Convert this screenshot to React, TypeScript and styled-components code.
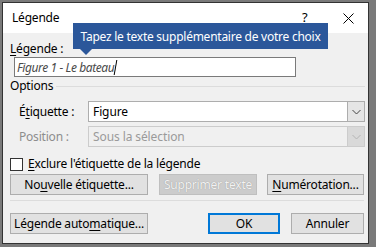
import React from "react";
import styled, { createGlobalStyle } from "styled-components";

const Global = createGlobalStyle`
  html, body { margin: 0; padding: 0; }
  body {
    background: #7a7a7a;
    width: 376px;
    height: 247px;
    overflow: hidden;
    font-family: "Noto Sans", "Open Sans", sans-serif;
    font-size: 12px;
    color: #000;
  }
`;

const Frame = styled.div`
  padding: 2px 7px 3px 2px;
`;

const Window = styled.div`
  box-sizing: border-box;
  width: 367px;
  height: 242px;
  border: 1px solid #333;
  background: #f0f0f0;
  display: flex;
  flex-direction: column;
  position: relative;
`;

const TitleBar = styled.div`
  height: 30px;
  background: #fff;
  display: flex;
  align-items: center;
  padding-left: 9px;
  padding-right: 14px;
  flex-shrink: 0;
`;

const Title = styled.div`
  flex: 1;
  font-size: 12px;
  letter-spacing: -0.2px;
  margin-top: -1px;
`;

const Help = styled.div`
  font-size: 13px;
  width: 10px;
  margin-right: 31px;
  margin-top: -2px;
`;

const Tooltip = styled.div`
  position: absolute;
  left: 70px;
  top: 20px;
  width: 255px;
  height: 26px;
  background: #2b579a;
  color: #fff;
  font-size: 12px;
  display: flex;
  align-items: center;
  justify-content: center;
  letter-spacing: -0.25px;
  &::after {
    content: "";
    position: absolute;
    left: 7px;
    bottom: -6px;
    border-left: 6px solid transparent;
    border-right: 6px solid transparent;
    border-top: 6px solid #2b579a;
  }
`;

const Body = styled.div`
  display: flex;
  flex-direction: column;
  padding: 0 3px 0 7px;
`;

const Label = styled.div<{ $disabled?: boolean }>`
  line-height: 16px;
  color: ${(p) => (p.$disabled ? "#8d8d8d" : "#000")};
  letter-spacing: -0.2px;
  white-space: nowrap;
`;

const CaptionLabel = styled(Label)`
  margin-top: 8px;
`;

const TextInput = styled.div`
  box-sizing: border-box;
  margin-left: 4px;
  width: 282px;
  height: 20px;
  background: #fff;
  border: 1px solid #7a7a7a;
  display: flex;
  align-items: center;
  padding-left: 2px;
  font-style: italic;
  color: #4a4a4a;
  letter-spacing: -0.4px;
`;

const Caret = styled.span`
  display: inline-block;
  width: 1px;
  height: 15px;
  background: #000;
  margin-left: 1px;
  transform: skewX(-10deg);
`;

const GroupHeader = styled.div`
  display: flex;
  align-items: center;
  margin-top: 1px;
  gap: 3px;
  &::after {
    content: "";
    flex: 1;
    height: 1px;
    background: #dcdcdc;
    margin-top: 1px;
  }
`;

const FieldRow = styled.div<{ $top: number }>`
  display: flex;
  align-items: center;
  margin-top: ${(p) => p.$top}px;
`;

const FieldLabel = styled(Label)`
  width: 71px;
  padding-left: 9px;
`;

const Select = styled.div<{ $disabled?: boolean }>`
  box-sizing: border-box;
  width: 285px;
  height: 21px;
  display: flex;
  border: 1px solid ${(p) => (p.$disabled ? "#cccccc" : "#adadad")};
  background: ${(p) => (p.$disabled ? "#f0f0f0" : "#fff")};
  color: ${(p) => (p.$disabled ? "#9a9a9a" : "#000")};
`;

const SelectValue = styled.div`
  flex: 1;
  display: flex;
  align-items: center;
  padding-left: 4px;
  letter-spacing: -0.1px;
`;

const SelectButton = styled.div<{ $disabled?: boolean }>`
  width: 16px;
  display: flex;
  align-items: center;
  justify-content: center;
  background: ${(p) => (p.$disabled ? "#d9d9d9" : "#e5e5e5")};
  border-left: 1px solid ${(p) => (p.$disabled ? "#cccccc" : "#adadad")};
  color: ${(p) => (p.$disabled ? "#b4b4b4" : "#444")};
`;

const CheckRow = styled.div`
  display: flex;
  align-items: center;
  gap: 5px;
  margin-top: 9px;
`;

const CheckBox = styled.div`
  box-sizing: border-box;
  width: 13px;
  height: 13px;
  background: #fff;
  border: 1px solid #333;
`;

const ButtonRow = styled.div<{ $top: number }>`
  display: flex;
  align-items: center;
  margin-top: ${(p) => p.$top}px;
`;

const Button = styled.div<{ $w: number; $gap?: number; $disabled?: boolean; $default?: boolean }>`
  box-sizing: border-box;
  width: ${(p) => p.$w}px;
  height: 21px;
  margin-left: ${(p) => p.$gap ?? 0}px;
  display: flex;
  align-items: center;
  justify-content: center;
  background: ${(p) => (p.$disabled ? "#cccccc" : "#e1e1e1")};
  border: ${(p) =>
    p.$default ? "2px solid #0078d7" : p.$disabled ? "1px solid #bfbfbf" : "1px solid #adadad"};
  color: ${(p) => (p.$disabled ? "#f2f2f2" : "#000")};
  text-shadow: ${(p) => (p.$disabled ? "0 0 1px #8a8a8a" : "none")};
  letter-spacing: -0.2px;
  white-space: nowrap;
`;

const Divider = styled.div`
  height: 1px;
  background: #dcdcdc;
  margin: 5px 1px 0 0;
`;

const U = styled.span`
  text-decoration: underline;
  text-underline-offset: 2px;
`;

const Chevron = () => (
  <svg width="9" height="6" viewBox="0 0 9 6">
    <path d="M0.5 1 L4.5 5 L8.5 1" fill="none" stroke="currentColor" strokeWidth="1" />
  </svg>
);

const CloseIcon = () => (
  <svg width="11" height="11" viewBox="0 0 11 11">
    <path d="M0.5 0.5 L10.5 10.5 M10.5 0.5 L0.5 10.5" stroke="#000" strokeWidth="1" />
  </svg>
);

export default function App() {
  return (
    <>
      <Global />
      <Frame>
        <Window>
          <TitleBar>
            <Title>Légende</Title>
            <Help>?</Help>
            <CloseIcon />
          </TitleBar>
          <Tooltip>Tapez le texte supplémentaire de votre choix</Tooltip>
          <Body>
            <CaptionLabel>
              <U>L</U>égende :
            </CaptionLabel>
            <TextInput>
              Figure 1 - Le bateau
              <Caret />
            </TextInput>
            <GroupHeader>
              <Label>Options</Label>
            </GroupHeader>
            <FieldRow $top={7}>
              <FieldLabel>
                É<U>t</U>iquette :
              </FieldLabel>
              <Select>
                <SelectValue>Figure</SelectValue>
                <SelectButton>
                  <Chevron />
                </SelectButton>
              </Select>
            </FieldRow>
            <FieldRow $top={4}>
              <FieldLabel $disabled>Position :</FieldLabel>
              <Select $disabled>
                <SelectValue>Sous la sélection</SelectValue>
                <SelectButton $disabled>
                  <Chevron />
                </SelectButton>
              </Select>
            </FieldRow>
            <CheckRow>
              <CheckBox />
              <Label>
                <U>E</U>xclure l'étiquette de la légende
              </Label>
            </CheckRow>
            <ButtonRow $top={2}>
              <Button $w={138}>
                No<U>u</U>velle étiquette...
              </Button>
              <Button $w={98} $gap={11} $disabled>
                Supprimer texte
              </Button>
              <Button $w={97} $gap={10}>
                <U>N</U>umérotation...
              </Button>
            </ButtonRow>
            <Divider />
            <ButtonRow $top={12}>
              <Button $w={138}>
                Légende auto<U>m</U>atique...
              </Button>
              <Button $w={72} $gap={60} $default>
                OK
              </Button>
              <Button $w={73} $gap={11}>
                Annuler
              </Button>
            </ButtonRow>
          </Body>
        </Window>
      </Frame>
    </>
  );
}
